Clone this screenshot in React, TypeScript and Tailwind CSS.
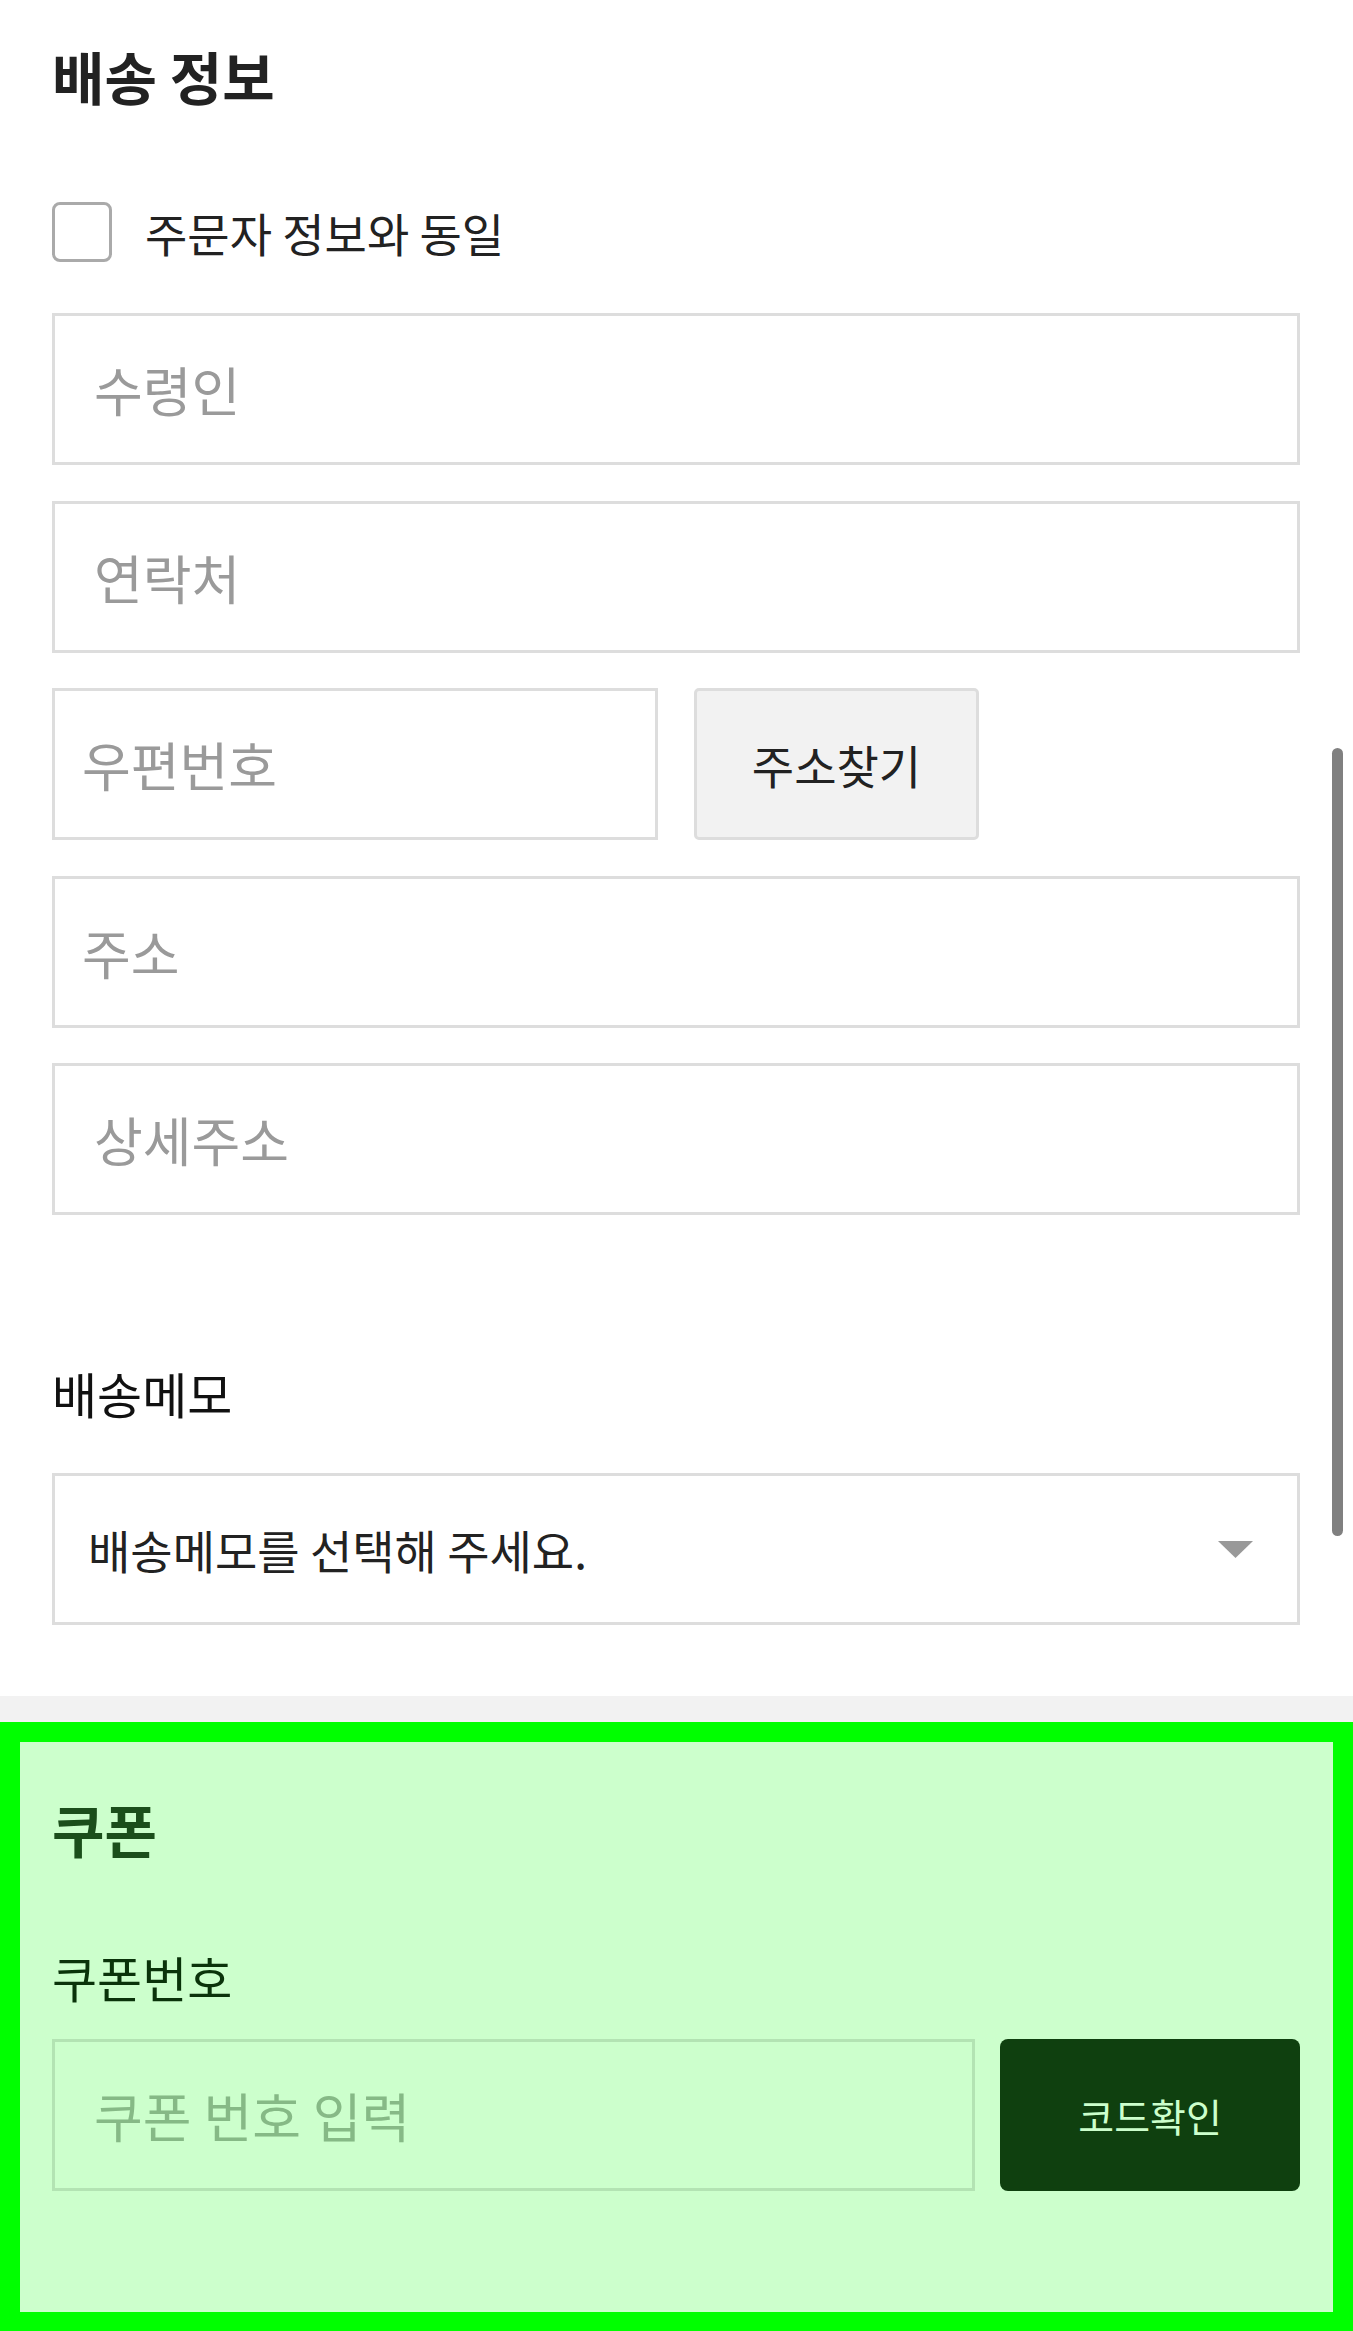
import React from 'react'

type FieldProps = {
  placeholder: string
  className?: string
}

const Field = ({ placeholder, className = 'w-full pl-[39px]' }: FieldProps) => (
  <input
    type="text"
    placeholder={placeholder}
    className={`h-[152px] border-[3px] border-[#dddddd] bg-white pr-[24px] text-[53px] text-[#222] outline-none placeholder:text-[#9a9a9a] ${className}`}
  />
)

const App = () => {
  return (
    <div className="relative w-full bg-white font-['Noto_Sans_CJK_KR','Noto_Sans',sans-serif] text-[#222]">
      {/* 배송 정보 */}
      <section className="pl-[52px] pr-[53px] pt-[47px] pb-[71px]">
        <h2 className="text-[57px] font-bold leading-none">배송 정보</h2>

        <label className="mt-[98px] flex items-center gap-[33px]">
          <span className="h-[60px] w-[60px] shrink-0 rounded-[8px] border-[3px] border-[#aaaaaa] bg-white" />
          <span className="text-[46px] leading-none">주문자 정보와 동일</span>
        </label>

        <div className="mt-[51px] flex flex-col gap-[35.5px]">
          <Field placeholder="수령인" />
          <Field placeholder="연락처" />
          <div className="flex gap-[36px]">
            <Field placeholder="우편번호" className="w-[606px] pl-[27px]" />
            <button className="h-[152px] w-[285px] rounded-[5px] border-[3px] border-[#dddddd] bg-[#f2f2f2] text-[46px] text-[#222]">
              주소찾기
            </button>
          </div>
          <Field placeholder="주소" className="w-full pl-[27px]" />
          <Field placeholder="상세주소" />
        </div>

        <p className="mt-[153px] text-[49px] leading-none text-[#111]">배송메모</p>

        <div className="mt-[56px] flex h-[152px] items-center justify-between border-[3px] border-[#dddddd] bg-white pl-[33px] pr-[44px]">
          <span className="text-[46px] text-[#222]">배송메모를 선택해 주세요.</span>
          <svg width="35" height="17" viewBox="0 0 35 17">
            <path d="M0 0 H35 L17.5 17 Z" fill="#999999" />
          </svg>
        </div>
      </section>

      <div className="h-[26px] bg-[#f2f2f2]" />

      {/* 쿠폰 */}
      <section className="border-[20px] border-[#00ff00] bg-[#ccffcc] pl-[32px] pr-[33px] pt-[58px] pb-[121px]">
        <h2 className="text-[57px] font-bold leading-none text-[#1b4e1b]">쿠폰</h2>
        <p className="mt-[95px] text-[49px] leading-none text-[#0a330a]">쿠폰번호</p>
        <div className="mt-[38px] flex gap-[25px]">
          <input
            type="text"
            placeholder="쿠폰 번호 입력"
            className="h-[152px] w-[924px] border-[3px] border-[#b3e3b3] bg-[#ccffcc] pl-[39px] text-[53px] outline-none placeholder:text-[#86b986]"
          />
          <button className="h-[152px] w-[300px] rounded-[8px] bg-[#0f400f] text-[39px] text-[#ccffcc]">
            코드확인
          </button>
        </div>
      </section>

      {/* scrollbar */}
      <div className="absolute left-[1332px] top-[748px] h-[788px] w-[11px] rounded-full bg-[#808080]" />
    </div>
  )
}

export default App
